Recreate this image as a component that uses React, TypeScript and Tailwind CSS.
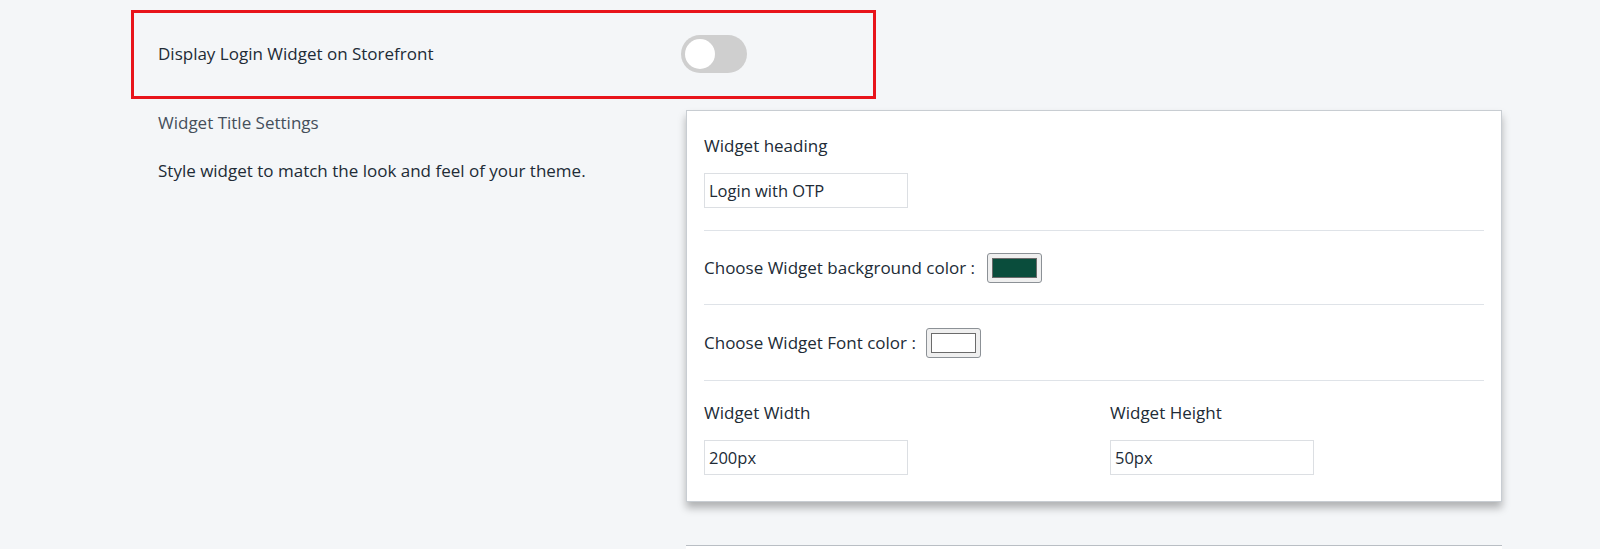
import React, { useState } from "react";

const font = { fontFamily: "'Open Sans', 'Noto Sans', sans-serif" };

const TextBox = ({ value }: { value: string }) => (
	<input
		defaultValue={value}
		className="w-[204px] h-[35px] border border-[#dcdfe3] bg-white px-[4px] text-[16.5px] text-[#212b36] outline-none"
	/>
);

const Swatch = ({ color }: { color: string }) => (
	<span className="inline-flex w-[55px] h-[30px] items-center justify-center rounded-[3px] border border-[#8c9196] bg-[#efefef] p-[4px]">
		<span className="block w-full h-full border border-[#6b6b6b]" style={{ background: color }} />
	</span>
);

export default function App() {
	const [on, setOn] = useState(false);

	return (
		<div className="w-[1600px] h-[549px] overflow-hidden bg-[#f4f6f8] text-[#212b36]" style={font}>
			<div className="flex pl-[131px] pt-[10px]">
				<div className="flex flex-col">
					{/* highlighted row */}
					<div className="flex w-[745px] h-[89px] items-center border-[3px] border-[#e8141b] pl-[24px] pb-[2px]">
						<span className="w-[523px] text-[17px]">Display Login Widget on Storefront</span>
						<button
							onClick={() => setOn(!on)}
							className={`flex w-[66px] h-[38px] items-center rounded-full p-[4px] ${on ? "bg-[#008060] justify-end" : "bg-[#cfcfcf] justify-start"}`}
						>
							<span className="block w-[30px] h-[30px] rounded-full bg-white" />
						</button>
					</div>

					<div className="flex">
						<div className="w-[555px] pl-[27px] pt-[11px]">
							<p className="text-[17px] text-[#454f5b]">Widget Title Settings</p>
							<p className="mt-[22px] text-[17px]">Style widget to match the look and feel of your theme.</p>
						</div>

						<div className="mt-[11px] w-[816px] h-[392px] bg-white border border-[#c8cdd2] shadow-[0_6px_8px_rgba(0,0,0,0.28)] px-[17px] pt-[23px]">
							<div className="pb-[22px] border-b border-[#dfe3e8]">
								<p className="text-[17px] leading-[24px]">Widget heading</p>
								<div className="mt-[15px]">
									<TextBox value="Login with OTP" />
								</div>
							</div>

							<div className="flex h-[74px] items-center gap-[12px] border-b border-[#dfe3e8] text-[17px]">
								<span>Choose Widget background color :</span>
								<Swatch color="#0a4d3c" />
							</div>

							<div className="flex h-[76px] items-center gap-[10px] border-b border-[#dfe3e8] text-[17px]">
								<span>Choose Widget Font color :</span>
								<Swatch color="#ffffff" />
							</div>

							<div className="grid grid-cols-2 pt-[20px] w-[812px]">
								<div>
									<p className="text-[17px] leading-[24px]">Widget Width</p>
									<div className="mt-[15px]">
										<TextBox value="200px" />
									</div>
								</div>
								<div>
									<p className="text-[17px] leading-[24px]">Widget Height</p>
									<div className="mt-[15px]">
										<TextBox value="50px" />
									</div>
								</div>
							</div>
						</div>
					</div>
				</div>
			</div>

			{/* next card peeking in at the bottom */}
			<div className="ml-[686px] mt-[43px] w-[816px] h-[20px] bg-white border-t border-[#b9bec4]" />
		</div>
	);
}
